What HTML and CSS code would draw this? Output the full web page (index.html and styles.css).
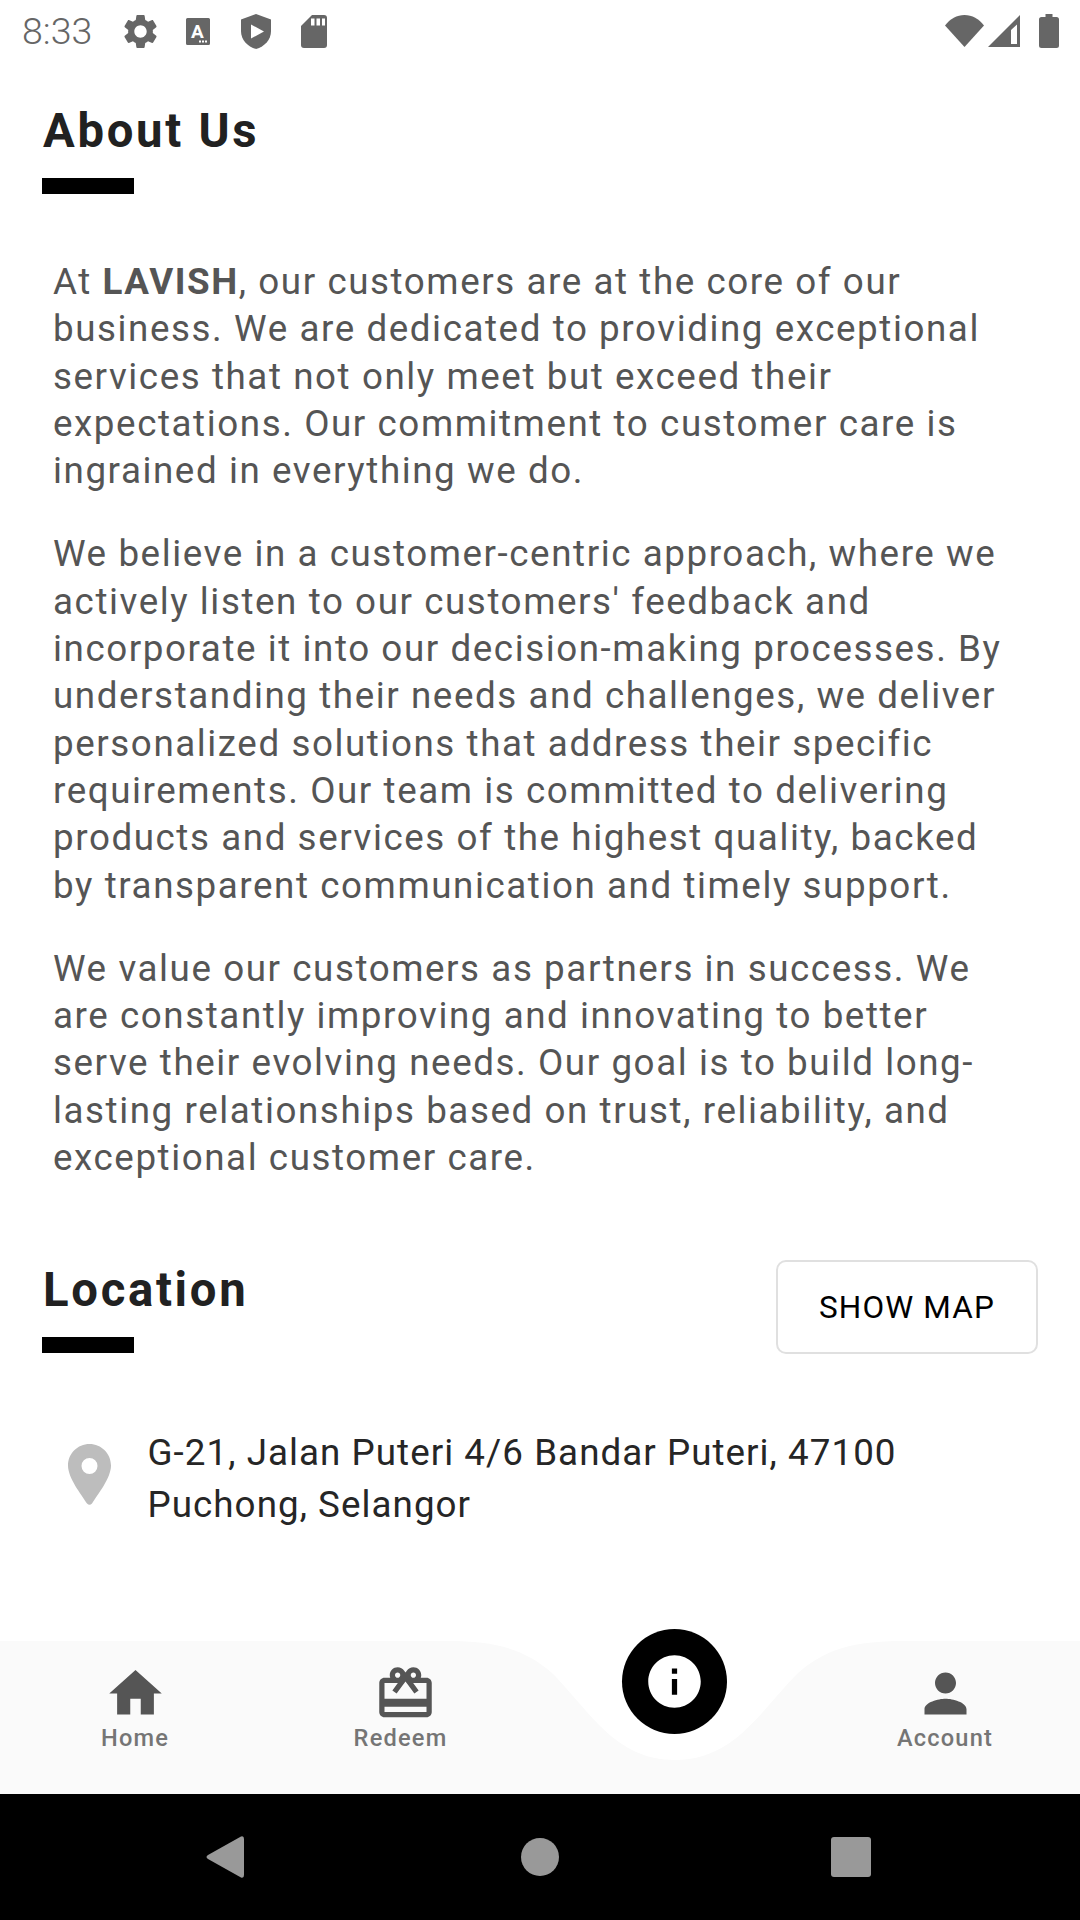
FILE: index.html
```html
<!DOCTYPE html>
<html lang="en">
<head>
<meta charset="utf-8">
<title>About Us</title>
<link rel="stylesheet" href="styles.css">
</head>
<body>
<div class="screen">
  <header class="status">
    <span class="time">8:33</span>
    <svg class="st-gear" viewBox="2.4 2.4 19.2 19.2"><path d="M19.14,12.94c0.04-0.3,0.06-0.61,0.06-0.94c0-0.32-0.02-0.64-0.07-0.94l2.03-1.58c0.18-0.14,0.23-0.41,0.12-0.61l-1.92-3.32c-0.12-0.22-0.37-0.29-0.59-0.22l-2.39,0.96c-0.5-0.38-1.03-0.7-1.62-0.94L14.4,2.81c-0.04-0.24-0.24-0.41-0.48-0.41h-3.84c-0.24,0-0.43,0.17-0.47,0.41L9.25,5.35C8.66,5.59,8.12,5.92,7.63,6.29L5.24,5.33c-0.22-0.08-0.47,0-0.59,0.22L2.74,8.87C2.62,9.08,2.66,9.34,2.86,9.48l2.03,1.58C4.84,11.36,4.8,11.69,4.8,12s0.02,0.64,0.07,0.94l-2.03,1.58c-0.18,0.14-0.23,0.41-0.12,0.61l1.92,3.32c0.12,0.22,0.37,0.29,0.59,0.22l2.39-0.96c0.5,0.38,1.03,0.7,1.62,0.94l0.36,2.54c0.05,0.24,0.24,0.41,0.48,0.41h3.84c0.24,0,0.44-0.17,0.47-0.41l0.36-2.54c0.59-0.24,1.13-0.56,1.62-0.94l2.39,0.96c0.22,0.08,0.47,0,0.59-0.22l1.92-3.32c0.12-0.22,0.07-0.47-0.12-0.61L19.14,12.94z M12,15.6c-1.98,0-3.6-1.62-3.6-3.6s1.62-3.6,3.6-3.6s3.6,1.62,3.6,3.6S13.98,15.6,12,15.6z"/></svg>
    <svg class="st-a" viewBox="0 0 24 27"><path d="M1.5 0h21A1.5 1.5 0 0 1 24 1.500v24a1.500 1.500 0 0 1-1.500 1.500h-21A1.500 1.500 0 0 1 0 25.500v-24A1.500 1.500 0 0 1 1.500 0z"/><text class="st-a-letter" x="11.500" y="20">A</text><rect class="st-white" x="13" y="22.500" width="2" height="2"/><rect class="st-white" x="16" y="22.500" width="2" height="2"/><rect class="st-white" x="19" y="22.500" width="2" height="2"/></svg>
    <svg class="st-shield" viewBox="0 0 30 35"><path d="M15 0L30 5.500V17C30 26 23.500 32.500 15 35C6.500 32.500 0 26 0 17V5.500z"/><path class="st-white" d="M10 10.500L23 17.500L10 24.500z"/></svg>
    <svg class="st-sd" viewBox="0 0 26 33"><path d="M11 0H23A3 3 0 0 1 26 3V30A3 3 0 0 1 23 33H3A3 3 0 0 1 0 30V11z"/><rect class="st-white" x="10" y="3.500" width="3.500" height="7"/><rect class="st-white" x="15.500" y="3.500" width="3.500" height="7"/><rect class="st-white" x="21" y="3.500" width="3" height="7"/></svg>
    <span class="status-gap"></span>
    <svg class="st-wifi" viewBox="0 0 39 32"><path d="M0 10.500C5 4 12 0 19.500 0S34 4 39 10.500L19.500 32z"/></svg>
    <svg class="st-signal" viewBox="0 0 32 32"><path fill-rule="evenodd" d="M32 0V32H0zM29 9.500L23 15V29H29z"/></svg>
    <svg class="st-battery" viewBox="0 0 20 34"><path d="M6.500 0H13.500V3H17.500A2.500 2.500 0 0 1 20 5.500V31.500A2.500 2.500 0 0 1 17.500 34H2.500A2.500 2.500 0 0 1 0 31.500V5.500A2.500 2.500 0 0 1 2.500 3H6.500z"/></svg>
  </header>

  <main class="content">
    <section class="about">
      <h2 class="title">About Us</h2>
      <div class="rule"></div>
      <div class="copy">
        <p>At <strong>LAVISH</strong>, our customers are at the core of our business. We are dedicated to providing exceptional services that not only meet but exceed their expectations. Our commitment to customer care is ingrained in everything we do.</p>
        <p>We believe in a customer-centric approach, where we actively listen to our customers' feedback and incorporate it into our decision-making processes. By understanding their needs and challenges, we deliver personalized solutions that address their specific requirements. Our team is committed to delivering products and services of the highest quality, backed by transparent communication and timely support.</p>
        <p>We value our customers as partners in success. We are constantly improving and innovating to better serve their evolving needs. Our goal is to build long-lasting relationships based on trust, reliability, and exceptional customer care.</p>
      </div>
    </section>
    <section class="location">
      <div class="location-head">
        <div class="location-title">
          <h2 class="title">Location</h2>
          <div class="rule"></div>
        </div>
        <button class="map-btn" type="button">SHOW MAP</button>
      </div>
      <div class="address">
        <svg class="pin" viewBox="0 0 43 61"><path fill-rule="evenodd" d="M21.500 0C33.400 0 43 9.600 43 21.500C43 34 30 50 24 59.500Q21.500 62 19 59.500C13 50 0 34 0 21.500C0 9.600 9.600 0 21.500 0zM21.500 14A8 8 0 1 0 21.500 30A8 8 0 1 0 21.500 14z"/></svg>
        <p>G-21, Jalan Puteri 4/6 Bandar Puteri, 47100<br>Puchong, Selangor</p>
      </div>
    </section>
  </main>

  <nav class="tabs">
    <svg class="tabs-bg" viewBox="0 0 1080 153"><path d="M0 0H448C495 0 525 8 552 32C590 70 615 119 675 119C735 119 760 70 798 32C825 8 855 0 902 0H1080V153H0z"/></svg>
    <a class="tab">
      <svg class="tab-icon" viewBox="0 0 24 24"><path d="M10 20v-6h4v6h5v-8h3L12 3 2 12h3v8z"/></svg>
      <span class="tab-label">Home</span>
    </a>
    <a class="tab">
      <svg class="tab-icon" viewBox="0 0 24 24"><path d="M20 6h-2.180c.11-.31.18-.65.18-1 0-1.660-1.340-3-3-3-1.050 0-1.960.54-2.500 1.350l-.5.67-.5-.68C10.960 2.540 10.050 2 9 2 7.340 2 6 3.340 6 5c0 .35.07.69.18 1H4c-1.110 0-1.990.89-1.990 2L2 19c0 1.110.89 2 2 2h16c1.110 0 2-.89 2-2V8c0-1.110-.89-2-2-2zm-5-2c.55 0 1 .45 1 1s-.45 1-1 1-1-.45-1-1 .45-1 1-1zM9 4c.55 0 1 .45 1 1s-.45 1-1 1-1-.45-1-1 .45-1 1-1zm11 15H4v-2h16v2zm0-5H4V8h5.080L7 10.830 8.620 12 11 8.760l1-1.360 1 1.360L15.380 12 17 10.830 14.920 8H20v6z"/></svg>
      <span class="tab-label tab-label-shift">Redeem</span>
    </a>
    <span class="tab"></span>
    <a class="tab">
      <svg class="tab-icon" viewBox="0 0 24 24"><path d="M12 12c2.210 0 4-1.790 4-4s-1.790-4-4-4-4 1.790-4 4 1.790 4 4 4zm0 2c-2.670 0-8 1.340-8 4v2h16v-2c0-2.660-5.330-4-8-4z"/></svg>
      <span class="tab-label">Account</span>
    </a>
    <button class="fab" type="button" aria-label="About">
      <svg class="fab-icon" viewBox="0 0 24 24"><path d="M12 2C6.480 2 2 6.480 2 12s4.480 10 10 10 10-4.480 10-10S17.520 2 12 2zm1 15h-2v-6h2v6zm0-8h-2V7h2v2z"/></svg>
    </button>
  </nav>

  <footer class="sysnav">
    <svg class="sys-back" viewBox="0 0 38 42"><path d="M35 0.500Q38 -0.500 38 3V39Q38 42.500 35 41.500L2 23Q-1 21 2 19z"/></svg>
    <span class="sys-home"></span>
    <span class="sys-recent"></span>
  </footer>
</div>
</body>
</html>
```
FILE: styles.css
```css
* { box-sizing: border-box; }
html, body { margin: 0; padding: 0; }
body { background: #fff; font-family: Roboto, "Liberation Sans", sans-serif; }
.screen { width: 1080px; height: 1920px; display: flex; flex-direction: column; overflow: hidden; background: #fff; }

.status { height: 62px; padding: 0 21px 0 22px; display: flex; align-items: center; flex: none; }
.status svg { fill: #666; flex: none; display: block; }
.time { font-size: 37.5px; line-height: 62px; color: #666; font-weight: 300; width: 71px; margin-right: 31px; white-space: nowrap; }
.st-gear { width: 33px; height: 33px; margin-right: 29px; }
.st-a { width: 24px; height: 27px; margin-right: 31px; }
.st-shield { width: 30px; height: 35px; margin-right: 30px; }
.st-sd { width: 26px; height: 33px; }
.status-gap { flex: 1; }
.st-wifi { width: 39px; height: 32px; margin-right: 4px; }
.st-signal { width: 32px; height: 32px; margin-right: 19px; }
.st-battery { width: 20px; height: 34px; }
.st-white { fill: #fff; }
.st-a-letter { fill: #fff; font-size: 19px; font-weight: 700; text-anchor: middle; font-family: Roboto, sans-serif; }

.content { flex: 1; padding: 40px 42px 0; min-height: 0; }
.title { margin: 2px 0 0 1px; font-size: 47.25px; line-height: 55px; font-weight: 700; letter-spacing: 2.7px; color: #212121; }
.rule { width: 92px; height: 16px; background: #000; margin-top: 19px; }

.copy { margin-top: 64px; padding-left: 11px; width: 970px; font-size: 36.75px; line-height: 47.3px; letter-spacing: 1.575px; color: #555; }
.copy p { margin: 0 0 36px; }
.copy strong { font-weight: 700; }

.location { margin-top: 79px; }
.location-head { display: flex; justify-content: space-between; align-items: flex-start; }
.location-title { padding-top: 1px; }
.map-btn { width: 262px; height: 94px; margin: 0; padding: 0; background: #fff; border: 2.5px solid #e0e0e0; border-radius: 10px; font-family: inherit; font-size: 31.5px; font-weight: 400; letter-spacing: 1.15px; color: #000; }
.address { display: flex; align-items: center; margin-top: 73px; padding-left: 26px; }
.pin { width: 43px; height: 61px; fill: #bdbdbd; flex: none; margin: 0 36.5px 9px 0; }
.address p { margin: 0; font-size: 36.75px; line-height: 52px; letter-spacing: 1.05px; color: #262626; }

.tabs { position: relative; height: 153px; flex: none; display: grid; grid-template-columns: repeat(4, 270px); }
.tabs-bg { position: absolute; left: 0; top: 0; width: 1080px; height: 153px; fill: #fafafa; }
.tab { position: relative; display: flex; flex-direction: column; align-items: center; padding-top: 21px; }
.tab-icon { width: 63px; height: 63px; fill: #555; display: block; }
.tab-label { font-size: 23.6px; line-height: 28px; margin-top: -1px; font-weight: 500; letter-spacing: 1.2px; color: #757575; }
.tab-label-shift { margin-right: 9px; }
.fab { position: absolute; left: 622px; top: -12px; width: 105px; height: 105px; padding: 21px; border: 0; border-radius: 50%; background: #000; }
.fab-icon { width: 63px; height: 63px; fill: #fff; display: block; }

.sysnav { height: 126px; flex: none; background: #000; display: grid; grid-template-columns: 430px 220px 1fr; align-items: center; }
.sys-back { width: 38px; height: 42px; fill: #999; justify-self: start; margin-left: 206px; grid-column: 1; }
.sys-home { width: 38px; height: 38px; border-radius: 50%; background: #999; justify-self: center; grid-column: 2; }
.sys-recent { width: 40px; height: 40px; border-radius: 3px; background: #999; margin-left: 181px; grid-column: 3; }
```
